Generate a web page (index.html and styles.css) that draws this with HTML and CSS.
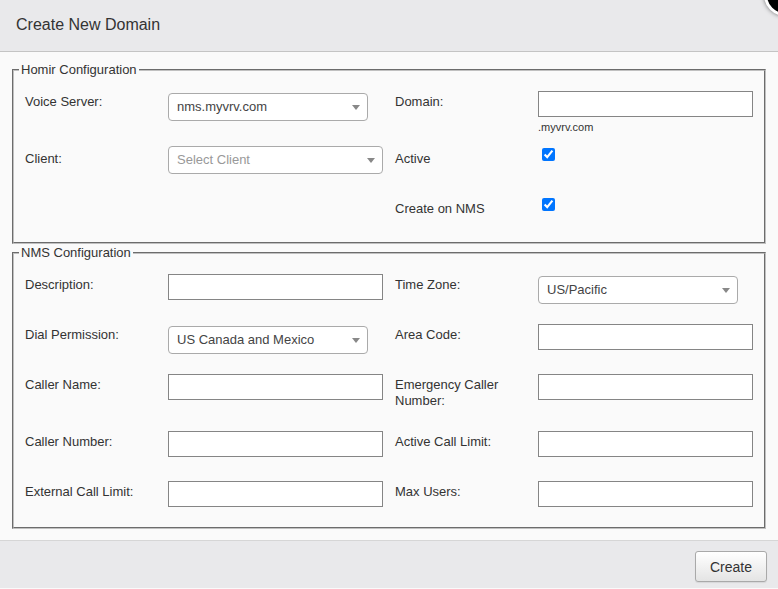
FILE: index.html
```html
<!DOCTYPE html>
<html lang="en">
  <head>
    <meta charset="UTF-8" />
    <meta name="viewport" content="width=device-width, initial-scale=1.0" />
    <title>Create New Domain</title>
    <link rel="stylesheet" href="styles.css">
  </head>
  <body>
    <div class="modal">
      <a href="javascript:void(0)" class="close-btn" title="Close">
        <svg width="14" height="14" viewBox="0 0 14 14">
          <path d="M2 2L12 12M12 2L2 12" stroke="#fff" stroke-width="2.4" stroke-linecap="round" />
        </svg>
      </a>

      <div class="modal-header">
        <h2>Create New Domain</h2>
      </div>

      <div class="modal-body">
        <fieldset>
          <legend>Homir Configuration</legend>

          <div class="form-row first">
            <label>Voice Server:</label>
            <div>
              <span class="select">
                <span class="select-text">nms.myvrv.com</span>
                <b class="select-arrow"></b>
              </span>
            </div>
            <label>Domain:</label>
            <div>
              <input type="text" class="field" />
              <div class="hint">.myvrv.com</div>
            </div>
          </div>

          <div class="form-row check-row">
            <label>Client:</label>
            <div>
              <span class="select wide">
                <span class="select-text placeholder">Select Client</span>
                <b class="select-arrow"></b>
              </span>
            </div>
            <label>Active</label>
            <div><input type="checkbox" checked /></div>
          </div>

          <div class="form-row check-row">
            <label></label>
            <div></div>
            <label>Create on NMS</label>
            <div><input type="checkbox" checked /></div>
          </div>
        </fieldset>

        <fieldset class="nms">
          <legend>NMS Configuration</legend>

          <div class="form-row">
            <label>Description:</label>
            <div><input type="text" class="field" /></div>
            <label>Time Zone:</label>
            <div>
              <span class="select">
                <span class="select-text">US/Pacific</span>
                <b class="select-arrow"></b>
              </span>
            </div>
          </div>

          <div class="form-row">
            <label>Dial Permission:</label>
            <div>
              <span class="select">
                <span class="select-text">US Canada and Mexico</span>
                <b class="select-arrow"></b>
              </span>
            </div>
            <label>Area Code:</label>
            <div><input type="text" class="field" /></div>
          </div>

          <div class="form-row">
            <label>Caller Name:</label>
            <div><input type="text" class="field" /></div>
            <label>Emergency Caller Number:</label>
            <div><input type="text" class="field" /></div>
          </div>

          <div class="form-row">
            <label>Caller Number:</label>
            <div><input type="text" class="field" /></div>
            <label>Active Call Limit:</label>
            <div><input type="text" class="field" /></div>
          </div>

          <div class="form-row">
            <label>External Call Limit:</label>
            <div><input type="text" class="field" /></div>
            <label>Max Users:</label>
            <div><input type="text" class="field" /></div>
          </div>
        </fieldset>
      </div>

      <div class="modal-footer">
        <button type="button" class="btn">Create</button>
      </div>
    </div>
  </body>
</html>
```

FILE: styles.css
```css
html,
body {
  margin: 0;
  padding: 0;
}
body {
  font-family: "Liberation Sans", Arial, sans-serif;
  font-size: 13px;
  color: #333;
  background: #fafafa;
  overflow: hidden;
}
.modal {
  position: relative;
  width: 778px;
}
.close-btn {
  position: absolute;
  top: -26px;
  right: -28px;
  width: 36px;
  height: 36px;
  border: 3px solid #fff;
  border-radius: 50%;
  background: #000;
  box-shadow: 0 0 4px rgba(0, 0, 0, 0.5);
  display: flex;
  align-items: center;
  justify-content: center;
  z-index: 10;
}
.modal-header {
  background: #e9e9eb;
  border-bottom: 1px solid #c4c4c4;
  height: 52px;
  box-sizing: border-box;
  padding: 16px 16px 0;
}
.modal-header h2 {
  margin: 0;
  font-size: 16px;
  font-weight: normal;
  line-height: 18px;
  color: #333;
}
.modal-body {
  background: #fafafa;
  padding: 10px 12px 11px;
}
fieldset {
  margin: 0;
  padding: 14px 11px 17px;
  border: 2px groove #c0c0c0;
}
fieldset.nms {
  margin-top: 1px;
  padding-bottom: 16px;
}
legend {
  margin-left: -6px;
  padding: 0 2px;
  font-size: 13px;
  line-height: 15px;
  color: #333;
}
.form-row {
  display: grid;
  grid-template-columns: 143px 227px 143px 215px;
  min-height: 30px;
  margin-bottom: 20px;
}
.form-row:last-child {
  margin-bottom: 0;
}
.form-row.first {
  margin-bottom: 11px;
}
.form-row label {
  padding: 3px 10px 2px 0;
  line-height: 16px;
  color: #333;
}
.form-row.check-row label {
  padding-top: 6px;
}
.field {
  display: block;
  box-sizing: border-box;
  width: 215px;
  height: 26px;
  margin: 0;
  padding: 2px 6px;
  border: 1px solid #858585;
  border-radius: 0;
  background: #fff;
  font: inherit;
}
.hint {
  margin-top: 4px;
  font-size: 11px;
  line-height: 13px;
  color: #333;
}
.select {
  position: relative;
  display: block;
  box-sizing: border-box;
  width: 200px;
  height: 28px;
  margin-top: 2px;
  border: 1px solid #aaa;
  border-radius: 4px;
  background: #fff;
}
.select.wide {
  width: 215px;
}
.check-row .select {
  margin-top: 1px;
}
.select-text {
  display: block;
  padding-left: 8px;
  line-height: 26px;
  color: #444;
}
.select-text.placeholder {
  color: #999;
}
.select-arrow {
  position: absolute;
  top: 11px;
  right: 7px;
  border-color: #888 transparent transparent transparent;
  border-style: solid;
  border-width: 5px 4px 0 4px;
}
input[type="checkbox"] {
  margin: 3px 3px 3px 4px;
}
.modal-footer {
  background: #e9e9eb;
  border-top: 1px solid #d6d6d6;
  padding: 10px 11px 6px;
  display: flex;
  justify-content: flex-end;
}
.btn {
  width: 72px;
  height: 31px;
  padding: 0;
  font-family: inherit;
  font-size: 14px;
  color: #333;
  background: linear-gradient(#ffffff, #e4e4e4);
  border: 1px solid #a9a9a9;
  border-radius: 3px;
  box-shadow: 0 1px 1px rgba(0, 0, 0, 0.08);
  cursor: pointer;
}
```
